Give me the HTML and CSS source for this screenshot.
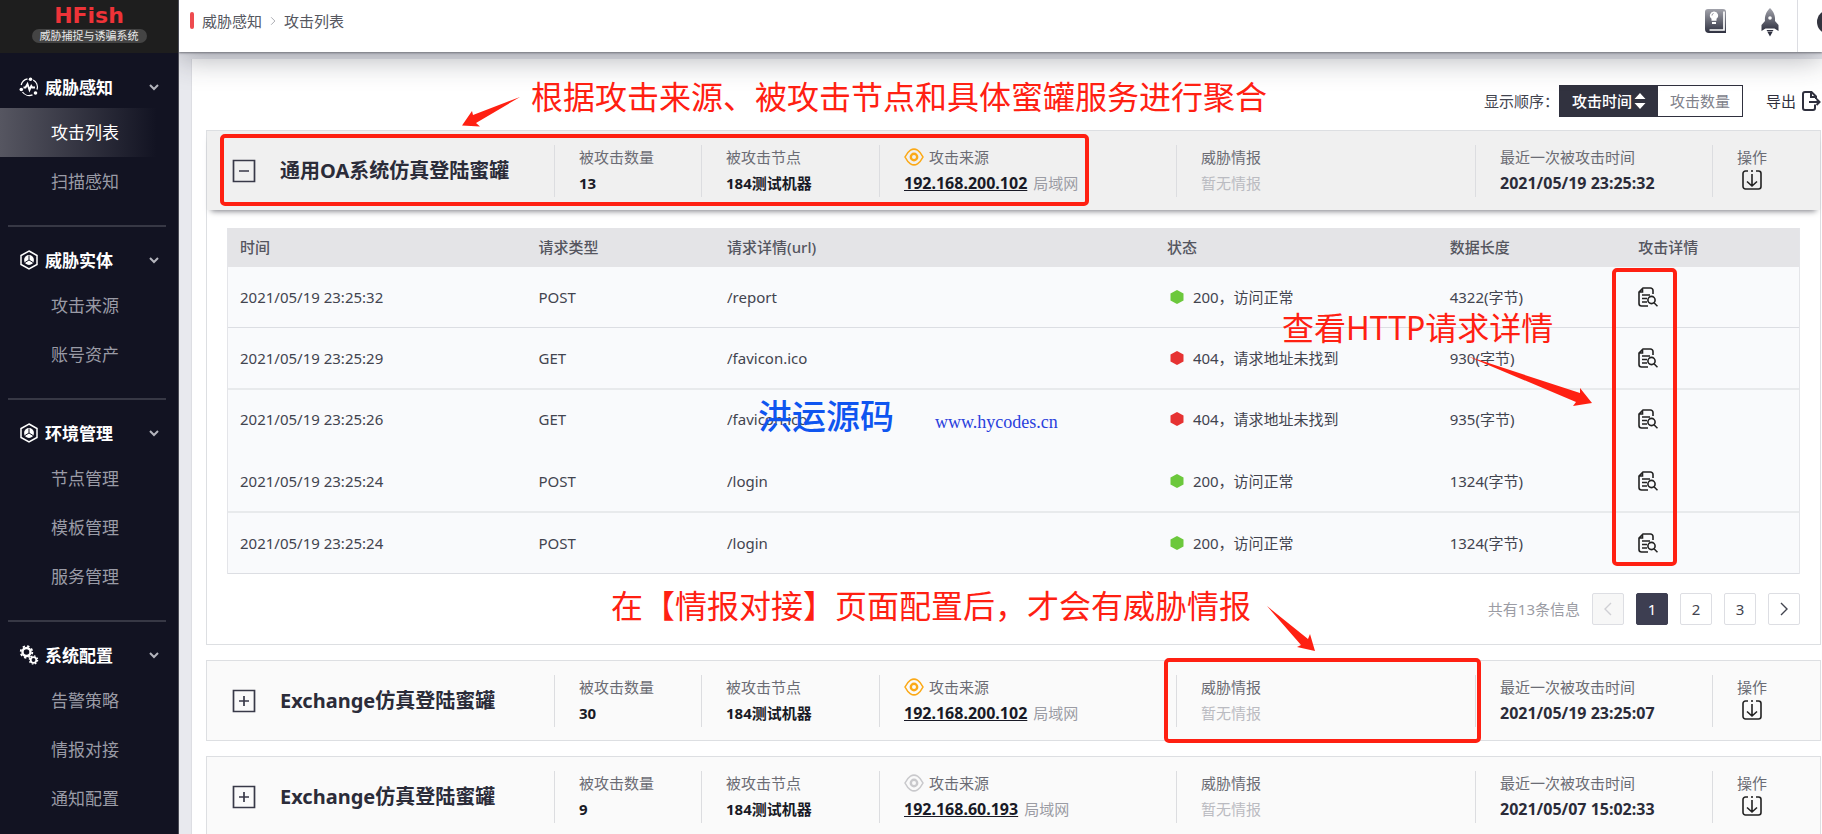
FILE: index.html
```html
<!DOCTYPE html>
<html lang="zh-CN">
<head>
<meta charset="utf-8">
<title>HFish 攻击列表</title>
<link rel="stylesheet" href="styles.css">
</head>
<body>
<svg class="defs" aria-hidden="true">
  <defs>
    <linearGradient id="steel" x1="0" y1="0" x2="0" y2="1">
      <stop offset="0" stop-color="#a2a3ab"/><stop offset="1" stop-color="#2e303f"/>
    </linearGradient>
  </defs>
  <symbol id="i-chevron" viewBox="0 0 12 12"><path d="M2 4l4 4 4-4" fill="none" stroke="currentColor" stroke-width="2"/></symbol>
  <symbol id="i-sense" viewBox="0 0 20 20">
    <path d="M8.500 1.800A8.200 8.200 0 0 0 2.200 8M3.500 15a8.200 8.200 0 0 0 10 2.800M18 12.500a8.200 8.200 0 0 0-3.800-9.500" fill="none" stroke="currentColor" stroke-width="1.300"/>
    <circle cx="11.500" cy="2.300" r="1.800" fill="currentColor"/><circle cx="2.300" cy="12.500" r="1.800" fill="currentColor"/><circle cx="16.500" cy="16" r="1.800" fill="currentColor"/>
    <path d="M4.500 10.500h2l2-3.500 2 6 1.800-4 1 1.500h2.700" fill="none" stroke="currentColor" stroke-width="1.900"/>
  </symbol>
  <symbol id="i-hex" viewBox="0 0 20 20">
    <path d="M10 1l8 4.500v9L10 19l-8-4.500v-9z" fill="none" stroke="currentColor" stroke-width="1.500"/>
    <circle cx="10" cy="10" r="4.900" fill="currentColor"/>
    <path d="M10 5.500v4.500M6 12.500l4-2.500 4 2.500" fill="none" stroke="#121322" stroke-width="1"/>
  </symbol>
  <symbol id="i-gears" viewBox="0 0 20 20">
    <circle cx="7.500" cy="7" r="4" fill="none" stroke="currentColor" stroke-width="2.400"/>
    <circle cx="7.500" cy="7" r="5.800" fill="none" stroke="currentColor" stroke-width="1.800" stroke-dasharray="2.300 2.250"/>
    <circle cx="14.500" cy="15" r="2.800" fill="none" stroke="currentColor" stroke-width="1.800"/>
    <circle cx="14.500" cy="15" r="4.100" fill="none" stroke="currentColor" stroke-width="1.300" stroke-dasharray="1.600 1.620"/>
  </symbol>
  <symbol id="i-book" viewBox="0 0 22 26">
    <path d="M3 1h15a3 3 0 0 1 3 3v21H4a4 4 0 0 1-4-4V4a3 3 0 0 1 3-3z" fill="url(#steel)"/>
    <path d="M19 3.500v18.500H4.500" fill="none" stroke="#fff" stroke-width="1.700"/>
    <path d="M9 3.500a4 4 0 0 1 2.500 7.200v2h-5v-2A4 4 0 0 1 9 3.500zM7 14h4v2H7z" fill="#fff"/>
    <path d="M8.500 5.500a2 2 0 0 0-1.500 2" fill="none" stroke="#8b8c96"/>
  </symbol>
  <symbol id="i-rocket" viewBox="0 0 18 30">
    <path d="M9 0c4 4 5.500 8 5 13l3.500 4v6l-4-2.500h-9L.5 23v-6L4 13C3.500 8 5 4 9 0z" fill="url(#steel)"/>
    <circle cx="9" cy="10" r="1.800" fill="#fff"/>
    <path d="M5.500 22h7l-1 1.500h-5zM6.500 24h5L9 28.500z" fill="#2e303f"/>
  </symbol>
  <symbol id="i-export" viewBox="0 0 20 20">
    <path d="M14 13.500V17a2 2 0 0 1-2 2H4a2 2 0 0 1-2-2V3a2 2 0 0 1 2-2h6.500L15 5.500V8M10 1.500V6h4.500M8 11h10M15.500 8l3 3-3 3" fill="none" stroke="currentColor" stroke-width="2"/>
  </symbol>
  <symbol id="i-minus" viewBox="0 0 24 24"><path d="M1.500 1.500h21v21h-21zM7 12h10" fill="none" stroke="currentColor" stroke-width="1.700"/></symbol>
  <symbol id="i-plus" viewBox="0 0 24 24"><path d="M1.500 1.500h21v21h-21zM7 12h10M12 7v10" fill="none" stroke="currentColor" stroke-width="1.700"/></symbol>
  <symbol id="i-eye" viewBox="0 0 20 18">
    <path d="M1 9c1.500-3 3.500-5.500 5.500-6.800a6.500 6.500 0 0 1 7 0C15.500 3.500 17.500 6 19 9c-1.500 3-3.500 5.500-5.500 6.800a6.500 6.500 0 0 1-7 0C4.500 14.500 2.500 12 1 9z" fill="none" stroke="currentColor" stroke-width="1.600"/>
    <circle cx="10" cy="9" r="3.200" fill="none" stroke="currentColor" stroke-width="2.400"/>
  </symbol>
  <symbol id="i-down" viewBox="0 0 20 20">
    <path d="M6 1H3.500A2.500 2.500 0 0 0 1 3.500v13A2.500 2.500 0 0 0 3.500 19h13a2.500 2.500 0 0 0 2.500-2.500v-13A2.500 2.500 0 0 0 16.500 1H14M10 0v2M10 4v12M5 11.500l5 4.500 5-4.500" fill="none" stroke="currentColor" stroke-width="1.600"/>
  </symbol>
  <symbol id="i-detail" viewBox="0 0 20 20">
    <path d="M10 19H3.500A2.500 2.500 0 0 1 1 16.500V5l4-4h7.500A2.500 2.500 0 0 1 15 3.500V7M1 5h3.500V1M4 8h8M4 11.500h5M4 15h5" fill="none" stroke="currentColor" stroke-width="1.600"/>
    <circle cx="13.500" cy="13" r="3.600" fill="none" stroke="currentColor" stroke-width="1.600"/>
    <path d="M16 15.800l3.500 3.500" stroke="currentColor" stroke-width="1.600"/>
  </symbol>
  <symbol id="i-dot" viewBox="0 0 14 14"><path d="M7 0l6.500 3.500v7L7 14 .5 10.500v-7z" fill="currentColor"/></symbol>
  <symbol id="i-sort" viewBox="0 0 12 18"><path d="M6 1l5.500 6H.5zM.5 11h11L6 17z" fill="currentColor"/></symbol>
  <symbol id="i-prev" viewBox="0 0 12 16"><path d="M9 2L3 8l6 6" fill="none" stroke="currentColor" stroke-width="1.400"/></symbol>
  <symbol id="i-next" viewBox="0 0 12 16"><path d="M3 2l6 6-6 6" fill="none" stroke="currentColor" stroke-width="1.400"/></symbol>
</svg>

<div class="app">
  <aside class="sidebar">
    <div class="brand">
      <strong class="brand-name">HFish</strong>
      <span class="brand-sub">威胁捕捉与诱骗系统</span>
    </div>
    <nav class="menu">
      <section class="group">
        <button class="group-title"><svg class="ico20"><use href="#i-sense"/></svg><span>威胁感知</span><svg class="chev"><use href="#i-chevron"/></svg></button>
        <a class="item active" href="#">攻击列表</a>
        <a class="item" href="#">扫描感知</a>
      </section>
      <section class="group">
        <button class="group-title"><svg class="ico20"><use href="#i-hex"/></svg><span>威胁实体</span><svg class="chev"><use href="#i-chevron"/></svg></button>
        <a class="item" href="#">攻击来源</a>
        <a class="item" href="#">账号资产</a>
      </section>
      <section class="group">
        <button class="group-title"><svg class="ico20"><use href="#i-hex"/></svg><span>环境管理</span><svg class="chev"><use href="#i-chevron"/></svg></button>
        <a class="item" href="#">节点管理</a>
        <a class="item" href="#">模板管理</a>
        <a class="item" href="#">服务管理</a>
      </section>
      <section class="group">
        <button class="group-title"><svg class="ico20"><use href="#i-gears"/></svg><span>系统配置</span><svg class="chev"><use href="#i-chevron"/></svg></button>
        <a class="item" href="#">告警策略</a>
        <a class="item" href="#">情报对接</a>
        <a class="item" href="#">通知配置</a>
      </section>
    </nav>
  </aside>

  <main class="main">
    <header class="topbar">
      <div class="crumbs"><i class="mark"></i><a href="#">威胁感知</a><svg class="crumb-sep"><use href="#i-next"/></svg><span>攻击列表</span></div>
      <div class="tools">
        <svg class="ico-book"><use href="#i-book"/></svg>
        <svg class="ico-rocket"><use href="#i-rocket"/></svg>
        <div class="user"><i class="avatar"></i></div>
      </div>
    </header>

    <div class="panel">
      <div class="toolbar">
        <span class="sort-label">显示顺序：</span>
        <div class="sort">
          <button class="sort-btn on">攻击时间<svg class="ico-sort"><use href="#i-sort"/></svg></button>
          <button class="sort-btn">攻击数量</button>
        </div>
        <button class="export">导出<svg class="ico20"><use href="#i-export"/></svg></button>
      </div>

      <article class="card open">
        <div class="head">
          <div class="name"><button class="toggle" aria-label="收起"><svg class="ico24"><use href="#i-minus"/></svg></button><h2>通用OA系统仿真登陆蜜罐</h2></div>
          <div class="cell"><span class="label">被攻击数量</span><b>13</b></div>
          <div class="cell"><span class="label">被攻击节点</span><b>184测试机器</b></div>
          <div class="cell"><span class="label"><svg class="eye hot"><use href="#i-eye"/></svg>攻击来源</span><span class="value"><a class="ip" href="#">192.168.200.102</a><span class="lan">局域网</span></span></div>
          <div class="cell"><span class="label">威胁情报</span><span class="none">暂无情报</span></div>
          <div class="cell"><span class="label">最近一次被攻击时间</span><b class="date">2021/05/19 23:25:32</b></div>
          <div class="cell"><span class="label">操作</span><button class="down" aria-label="下载"><svg class="ico20"><use href="#i-down"/></svg></button></div>
        </div>
        <div class="body">
          <table class="log">
            <colgroup><col class="c1"><col class="c2"><col class="c3"><col class="c4"><col class="c5"><col class="c6"></colgroup>
            <thead><tr><th>时间</th><th>请求类型</th><th>请求详情(url)</th><th>状态</th><th>数据长度</th><th>攻击详情</th></tr></thead>
            <tbody>
              <tr><td>2021/05/19 23:25:32</td><td>POST</td><td>/report</td><td><span class="status"><svg class="dot ok"><use href="#i-dot"/></svg>200，访问正常</span></td><td>4322(字节)</td><td><button class="detail" aria-label="详情"><svg class="ico20"><use href="#i-detail"/></svg></button></td></tr>
              <tr class="thick"><td>2021/05/19 23:25:29</td><td>GET</td><td>/favicon.ico</td><td><span class="status"><svg class="dot bad"><use href="#i-dot"/></svg>404，请求地址未找到</span></td><td>930(字节)</td><td><button class="detail" aria-label="详情"><svg class="ico20"><use href="#i-detail"/></svg></button></td></tr>
              <tr class="plain"><td>2021/05/19 23:25:26</td><td>GET</td><td>/favicon.ico</td><td><span class="status"><svg class="dot bad"><use href="#i-dot"/></svg>404，请求地址未找到</span></td><td>935(字节)</td><td><button class="detail" aria-label="详情"><svg class="ico20"><use href="#i-detail"/></svg></button></td></tr>
              <tr class="thick"><td>2021/05/19 23:25:24</td><td>POST</td><td>/login</td><td><span class="status"><svg class="dot ok"><use href="#i-dot"/></svg>200，访问正常</span></td><td>1324(字节)</td><td><button class="detail" aria-label="详情"><svg class="ico20"><use href="#i-detail"/></svg></button></td></tr>
              <tr><td>2021/05/19 23:25:24</td><td>POST</td><td>/login</td><td><span class="status"><svg class="dot ok"><use href="#i-dot"/></svg>200，访问正常</span></td><td>1324(字节)</td><td><button class="detail" aria-label="详情"><svg class="ico20"><use href="#i-detail"/></svg></button></td></tr>
            </tbody>
          </table>
          <div class="pager">
            <span class="total">共有13条信息</span>
            <button class="page" disabled aria-label="上一页"><svg class="ico-page"><use href="#i-prev"/></svg></button>
            <button class="page current">1</button>
            <button class="page">2</button>
            <button class="page">3</button>
            <button class="page" aria-label="下一页"><svg class="ico-page"><use href="#i-next"/></svg></button>
          </div>
        </div>
      </article>

      <article class="card">
        <div class="head">
          <div class="name"><button class="toggle" aria-label="展开"><svg class="ico24"><use href="#i-plus"/></svg></button><h2>Exchange仿真登陆蜜罐</h2></div>
          <div class="cell"><span class="label">被攻击数量</span><b>30</b></div>
          <div class="cell"><span class="label">被攻击节点</span><b>184测试机器</b></div>
          <div class="cell"><span class="label"><svg class="eye hot"><use href="#i-eye"/></svg>攻击来源</span><span class="value"><a class="ip" href="#">192.168.200.102</a><span class="lan">局域网</span></span></div>
          <div class="cell"><span class="label">威胁情报</span><span class="none">暂无情报</span></div>
          <div class="cell"><span class="label">最近一次被攻击时间</span><b class="date">2021/05/19 23:25:07</b></div>
          <div class="cell"><span class="label">操作</span><button class="down" aria-label="下载"><svg class="ico20"><use href="#i-down"/></svg></button></div>
        </div>
      </article>

      <article class="card">
        <div class="head">
          <div class="name"><button class="toggle" aria-label="展开"><svg class="ico24"><use href="#i-plus"/></svg></button><h2>Exchange仿真登陆蜜罐</h2></div>
          <div class="cell"><span class="label">被攻击数量</span><b>9</b></div>
          <div class="cell"><span class="label">被攻击节点</span><b>184测试机器</b></div>
          <div class="cell"><span class="label"><svg class="eye"><use href="#i-eye"/></svg>攻击来源</span><span class="value"><a class="ip" href="#">192.168.60.193</a><span class="lan">局域网</span></span></div>
          <div class="cell"><span class="label">威胁情报</span><span class="none">暂无情报</span></div>
          <div class="cell"><span class="label">最近一次被攻击时间</span><b class="date">2021/05/07 15:02:33</b></div>
          <div class="cell"><span class="label">操作</span><button class="down" aria-label="下载"><svg class="ico20"><use href="#i-down"/></svg></button></div>
        </div>
      </article>
    </div>
  </main>
</div>

<div class="notes">
  <div class="box box-group"></div>
  <div class="box box-detail"></div>
  <div class="box box-intel"></div>
  <svg class="arrows">
    <path d="M520 97L473 115L472 111L462 125.500L480 126.500L476 123z"/>
    <path d="M1467 356L1580 393L1580 388L1592 403L1573 406L1576 402z"/>
    <path d="M1267 606L1308 639L1310 634L1315 651L1297 647L1301 645z"/>
  </svg>
  <p class="note note-group">根据攻击来源、被攻击节点和具体蜜罐服务进行聚合</p>
  <p class="note note-detail">查看HTTP请求详情</p>
  <p class="note note-intel">在【情报对接】页面配置后，才会有威胁情报</p>
  <p class="stamp">洪运源码</p>
  <p class="stamp-url">www.hycodes.cn</p>
</div>
</body>
</html>
```
FILE: styles.css
```css
* { box-sizing: border-box; }
body {
  margin: 0;
  height: 100vh;
  overflow: hidden;
  position: relative;
  font: 15px/22px "Noto Sans", "Noto Sans CJK SC", sans-serif;
  color: #42444f;
  background: #e8e9ee;
}
button { font: inherit; color: inherit; background: none; border: 0; padding: 0; }
a { color: inherit; text-decoration: none; }
h2, p { margin: 0; }
svg { flex: none; display: block; }
.defs { position: absolute; width: 0; height: 0; }
.ico20 { width: 20px; height: 20px; }
.ico24 { width: 24px; height: 24px; }

.app { display: flex; height: 100vh; }

/* Sidebar */
.sidebar { flex: none; width: 179px; background: #121322; border-right: 1px solid #4a4b55; overflow: hidden; }
.brand {
  height: 53px;
  padding-top: 2px;
  display: flex;
  flex-direction: column;
  align-items: center;
  background: #1e1e1e;
}
.brand-name { font-family: "DejaVu Sans", sans-serif; font-size: 22px; line-height: 27px; color: #ee3338; }
.brand-sub { padding: 0 8px; border-radius: 7px; background: #444; color: #e8e8e8; font-size: 11px; line-height: 14px; }
.menu { padding-top: 13px; }
.group + .group::before { content: ""; display: block; height: 2px; margin: 19px 12px 12px 8px; background: #373845; }
.group-title {
  display: flex;
  align-items: center;
  width: 100%;
  height: 42px;
  padding: 0 18px 0 19px;
  font-size: 17px;
  font-weight: 700;
  color: #fff;
  text-align: left;
}
.group-title span { flex: 1; padding: 2px 0 0 6px; }
.chev { width: 12px; height: 12px; color: #b4b5bd; }
.item { display: block; padding: 1px 0 0 51px; font-size: 17px; line-height: 48px; color: #9a9ba6; }
.item.active { color: #fff; background: linear-gradient(90deg, #565661, #121322 88%); }

/* Top bar */
.main { flex: 1; min-width: 0; }
.topbar {
  position: relative;
  z-index: 1;
  display: flex;
  justify-content: space-between;
  height: 52px;
  background: #fff;
  box-shadow: 0 1px 2px #73747c, 0 6px 30px rgba(40, 42, 55, .38);
  clip-path: inset(0 0 -60px 0);
}
.crumbs { display: flex; align-items: center; height: 41px; padding-left: 11px; color: #55575f; }
.mark { width: 4px; height: 17px; margin-right: 8px; border-radius: 2px; background: #ee4b4f; }
.crumb-sep { width: 8px; height: 10px; margin: 0 7px; color: #a0a1a8; }
.tools { display: flex; }
.ico-book { width: 22px; height: 26px; margin: 8px 34px 0 0; }
.ico-rocket { width: 18px; height: 30px; margin: 8px 18px 0 0; }
.user { width: 25px; overflow: hidden; border-left: 1px solid #dcdde2; padding: 10px 0 0 19px; }
.avatar { display: block; width: 24px; height: 24px; border-radius: 50%; background: #33343f; }

/* Content */
.panel { margin: 7px 0 0 12px; padding: 0 1px 0 14px; background: #fff; border-left: 1px solid #dddee3; }
.toolbar { display: flex; align-items: center; justify-content: flex-end; height: 71px; padding-top: 12px; }
.sort { display: flex; border: 1px solid #2f303e; }
.sort-btn { display: flex; align-items: center; gap: 2px; height: 30px; padding: 0 12px; color: #80818a; }
.sort-btn.on { color: #fff; background: #31323f; font-weight: 500; }
.ico-sort { width: 12px; height: 18px; }
.export { display: flex; align-items: center; gap: 5px; margin-left: 23px; color: #2f303e; }

.card { border: 1px solid #dddfe2; margin-bottom: 15px; background: #fafafa; }
.card.open { background: #fff; }
.head {
  display: grid;
  grid-template-columns: 347fr 147fr 178fr 297fr 299fr 237fr 108fr;
  align-items: center;
  height: 79px;
}
.open .head { background: #f0f0f0; box-shadow: 0 5px 6px -4px #777880; }
.name { display: flex; align-items: center; padding-left: 25px; gap: 24px; }
.name h2 { font-size: 20px; line-height: 28px; font-weight: 700; color: #2b2c39; white-space: nowrap; }
.toggle { color: #383948; }
.cell { height: 52px; padding-left: 24px; border-left: 1px solid #dcdde0; white-space: nowrap; }
.label { display: flex; align-items: center; gap: 5px; height: 25px; color: #6b6c74; }
.cell b, .none, .value { display: block; line-height: 26px; color: #191a26; }
.cell .none { color: #babbc1; }
.cell .date { color: #2b2c39; font-size: 16px; }
.ip { font-size: 16px; font-weight: 700; color: #191a26; text-decoration: underline; }
.lan { padding-left: 6px; color: #9b9ca4; }
.eye { width: 20px; height: 18px; color: #c9c9cc; }
.eye.hot { color: #fba918; }
.down { margin-left: 5px; color: #222; }

.body { padding: 18px 20px 19px 20px; }
.log { width: 100%; table-layout: fixed; border-collapse: separate; border-spacing: 0; border: 1px solid #e4e5e9; border-width: 0 1px; }
.c1 { width: 19%; } .c2 { width: 12%; } .c3 { width: 28%; } .c4 { width: 18%; } .c5 { width: 12%; } .c6 { width: 11%; }
.log th { height: 39px; padding: 0 12px 1px; text-align: left; font-weight: 500; color: #55565f; background: #e4e4e7; }
.log td { height: 61px; padding: 0 12px 1px; background: #f9fafc; border-bottom: 1px solid #dcdee3; }
.log .thick td { height: 62px; border-bottom: 2px solid #e8eaec; }
.log .plain td { padding-bottom: 3px; border-bottom: 0; }
.status { display: flex; align-items: center; gap: 9px; padding-left: 3px; }
.dot { width: 14px; height: 14px; }
.ok { color: #6cc83c; }
.bad { color: #e63232; }
.detail { display: block; color: #222; }

.pager { display: flex; align-items: center; justify-content: flex-end; gap: 12px; padding-top: 19px; }
.total { color: #9b9ca4; }
.page { display: flex; align-items: center; justify-content: center; width: 32px; height: 32px; border: 1px solid #dddee3; border-radius: 2px; background: #fff; }
.page:disabled { background: #f7f7f7; color: #cfcfd4; }
.page.current { background: #3d3e51; border-color: #3d3e51; color: #fff; }
.ico-page { width: 12px; height: 16px; }

/* Annotation layer */
.notes { position: absolute; inset: 0; z-index: 2; pointer-events: none; }
.notes > * { position: absolute; }
.arrows { inset: 0; width: 100%; height: 100%; fill: #ff2012; }
.box { border: 4px solid #ff2012; border-radius: 5px; }
.box-group { left: 220px; top: 134px; width: 869px; height: 72px; }
.box-detail { left: 1612px; top: 268px; width: 65px; height: 298px; }
.box-intel { left: 1164px; top: 658px; width: 317px; height: 85px; }
.note { font-size: 32px; line-height: 40px; color: #ff2012; white-space: nowrap; }
.note-group { left: 531px; top: 77px; }
.note-detail { left: 1282px; top: 308px; }
.note-intel { left: 611px; top: 586px; }
.stamp { left: 758px; top: 396px; font-size: 34px; line-height: 40px; font-weight: 500; color: #0f55f0; }
.stamp-url { left: 935px; top: 410px; font: 18px/24px "Liberation Serif", serif; color: #2a3fdc; }
```
